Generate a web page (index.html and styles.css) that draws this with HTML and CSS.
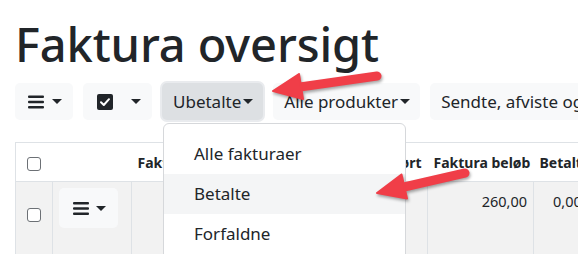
FILE: index.html
```html
<!DOCTYPE html>
<html lang="da">

<head>
    <meta charset="UTF-8">
    <meta name="viewport" content="width=device-width, initial-scale=1.0">
    <title>Faktura oversigt</title>
    <link rel="stylesheet" href="styles.css">
</head>

<body>
    <div class="page">
        <h1 class="title">Faktura oversigt</h1>

        <div class="toolbar">
            <button class="btn btn-list">
                <svg class="ico-list" width="16" height="14" viewBox="0 0 16 14">
                    <rect x="0" y="0.5" width="16" height="2.6" rx="1"></rect>
                    <rect x="0" y="5.7" width="16" height="2.6" rx="1"></rect>
                    <rect x="0" y="10.9" width="16" height="2.6" rx="1"></rect>
                </svg>
                <span class="caret"></span>
            </button>
            <button class="btn btn-check">
                <svg width="16" height="16" viewBox="0 0 16 16">
                    <rect x="0" y="0" width="16" height="16" rx="2" fill="#212529"></rect>
                    <path d="M4 8.3 L6.8 11 L12 5.2" fill="none" stroke="#fff" stroke-width="2" stroke-linecap="round" stroke-linejoin="round"></path>
                </svg>
                <span class="caret"></span>
            </button>
            <div class="dropdown">
                <button class="btn active">Ubetalte<span class="caret"></span></button>
                <ul class="dropdown-menu">
                    <li>Alle fakturaer</li>
                    <li class="hover">Betalte</li>
                    <li>Forfaldne</li>
                    <li>Krediterede</li>
                </ul>
            </div>
            <button class="btn">Alle produkter<span class="caret"></span></button>
            <button class="btn">Sendte, afviste og godkendte</button>
        </div>

        <table class="invoices">
            <colgroup>
                <col style="width: 37px">
                <col style="width: 79px">
                <col style="width: 120px">
                <col style="width: 90px">
                <col style="width: 86px">
                <col style="width: 106px">
                <col style="width: 62px">
            </colgroup>
            <thead>
                <tr>
                    <th class="cell-check"><span class="checkbox"></span></th>
                    <th></th>
                    <th>Faktura nr.</th>
                    <th>Kunde</th>
                    <th class="num">Bogført</th>
                    <th class="num">Faktura beløb</th>
                    <th>Betalt beløb</th>
                </tr>
            </thead>
            <tbody>
                <tr class="striped">
                    <td class="cell-check"><span class="checkbox"></span></td>
                    <td>
                        <button class="btn btn-row">
                            <svg class="ico-list" width="16" height="13" viewBox="0 0 16 13">
                                <rect x="0" y="0" width="16" height="2.6" rx="1"></rect>
                                <rect x="0" y="5.2" width="16" height="2.6" rx="1"></rect>
                                <rect x="0" y="10.4" width="16" height="2.6" rx="1"></rect>
                            </svg>
                            <span class="caret"></span>
                        </button>
                    </td>
                    <td class="num">1042</td>
                    <td>Jensen</td>
                    <td>12-05</td>
                    <td class="num">260,00</td>
                    <td class="paid">0,00</td>
                </tr>
                <tr>
                    <td class="cell-check"><span class="checkbox"></span></td>
                    <td>
                        <button class="btn btn-row">
                            <svg class="ico-list" width="16" height="13" viewBox="0 0 16 13">
                                <rect x="0" y="0" width="16" height="2.6" rx="1"></rect>
                                <rect x="0" y="5.2" width="16" height="2.6" rx="1"></rect>
                                <rect x="0" y="10.4" width="16" height="2.6" rx="1"></rect>
                            </svg>
                            <span class="caret"></span>
                        </button>
                    </td>
                    <td class="num">1041</td>
                    <td>Hansen</td>
                    <td>10-05</td>
                    <td class="num">1.250,00</td>
                    <td class="paid">0,00</td>
                </tr>
            </tbody>
        </table>

        <!-- annotation arrows -->
        <svg class="arrows" width="578" height="254" viewBox="0 0 578 254">
            <g class="arrow">
                <line x1="377" y1="76" x2="300" y2="87"></line>
                <polygon points="273,91 303,99 299,74"></polygon>
            </g>
            <g class="arrow">
                <line x1="465" y1="173" x2="404" y2="187"></line>
                <polygon points="377,193 407,198.5 401.5,174.5"></polygon>
            </g>
        </svg>
    </div>
</body>

</html>
```

FILE: styles.css
```css
html,
body {
    margin: 0;
    padding: 0;
    background: #fff;
}

body {
    font-family: "Noto Sans", "Open Sans", sans-serif;
    color: #212529;
}

.page {
    position: relative;
    width: 578px;
    height: 254px;
    overflow: hidden;
    padding: 0 15px;
    box-sizing: border-box;
}

.title {
    margin: 0;
    padding-top: 14px;
    font-size: 47px;
    font-weight: 500;
    line-height: 60px;
    letter-spacing: -0.1px;
    white-space: nowrap;
}

.toolbar {
    display: flex;
    gap: 10px;
    margin-top: 9px;
    white-space: nowrap;
}

.btn {
    display: inline-flex;
    align-items: center;
    height: 37px;
    padding: 0 10px 0 11px;
    border: 0;
    border-radius: 5px;
    background: #f8f9fa;
    color: #212529;
    font-family: inherit;
    font-size: 17px;
    flex-shrink: 0;
}

.btn.active {
    background: #dde0e3;
    box-shadow: 0 0 0 2px #e9ebee;
}

.caret {
    display: inline-block;
    width: 0;
    height: 0;
    margin-left: 2px;
    border-top: 5px solid #212529;
    border-left: 5px solid transparent;
    border-right: 5px solid transparent;
}

.ico-list {
    fill: #212529;
}

.btn-list {
    padding: 0 11px 0 13px;
}

.btn-list .caret {
    margin-left: 8px;
}

.btn-check {
    padding: 0 11px 0 14px;
}

.btn-check .caret {
    margin-left: 18px;
}

.dropdown {
    position: relative;
}

.dropdown-menu {
    position: absolute;
    top: 40px;
    left: 1px;
    z-index: 2;
    width: 243px;
    margin: 0;
    padding: 10px 0;
    list-style: none;
    background: #fff;
    border: 1px solid #d6d8db;
    border-radius: 6px;
    box-sizing: border-box;
    font-size: 17px;
}

.dropdown-menu li {
    height: 40px;
    line-height: 40px;
    padding: 0 30px;
}

.dropdown-menu li.hover {
    background: #f4f5f6;
}

.invoices {
    margin-top: 22px;
    border-collapse: collapse;
    table-layout: fixed;
    width: 580px;
    border-left: 1px solid #dee2e6;
    font-size: 14.5px;
}

.invoices th {
    height: 38px;
    padding: 0 6px;
    text-align: left;
    font-size: 14px;
    font-weight: 700;
    white-space: nowrap;
    overflow: hidden;
    border-top: 1px solid #dee2e6;
    border-bottom: 1px solid #dee2e6;
}

.invoices td {
    height: 47px;
    padding: 6px;
    vertical-align: top;
    line-height: 24px;
    white-space: nowrap;
    overflow: hidden;
    border: 1px solid #dee2e6;
}

.invoices td.num,
.invoices th.num {
    text-align: right;
}

.invoices td.num,
.invoices td.paid {
    padding-top: 7px;
}

.invoices td.paid {
    padding-left: 19px;
}

.invoices tr.striped td {
    background: #f2f2f2;
}

.cell-check {
    text-align: center !important;
}

.invoices td.cell-check {
    padding-top: 19px;
}

.checkbox {
    display: inline-block;
    width: 14px;
    height: 14px;
    border: 1px solid #6c7075;
    border-radius: 3px;
    background: #fff;
    box-sizing: border-box;
    vertical-align: middle;
}

.btn-row {
    height: 40px;
    padding: 0 12px 0 14px;
}

.btn-row .caret {
    margin-left: 7px;
}

.arrows {
    position: absolute;
    top: 0;
    left: 0;
    z-index: 3;
    pointer-events: none;
}

.arrow {
    fill: #f03e48;
    stroke: #f03e48;
    filter: drop-shadow(1px 2px 1.5px rgba(0, 0, 0, 0.35));
}

.arrow line {
    stroke-width: 9;
    stroke-linecap: round;
}

.arrow polygon {
    stroke-width: 2;
    stroke-linejoin: round;
}
```
